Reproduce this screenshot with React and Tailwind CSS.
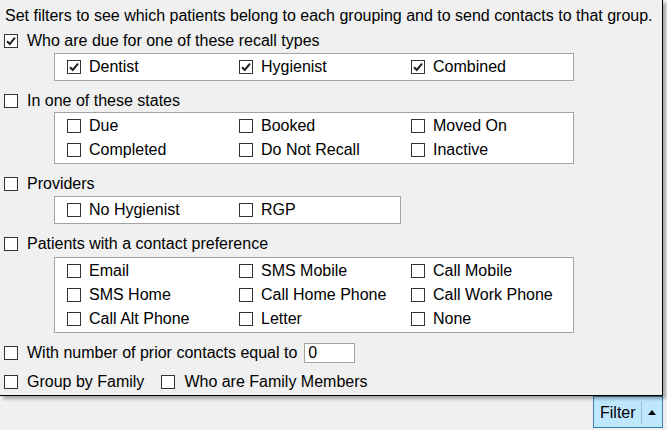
import clsx from "clsx";

function Check({ checked }) {
  return (
    <span className="flex h-[14px] w-[14px] shrink-0 items-center justify-center border border-[#333333] bg-white">
      {checked && (
        <svg width="12" height="12" viewBox="0 0 12 12">
          <path d="M2 6.2 L4.8 9 L10 2.6" fill="none" stroke="#222222" strokeWidth="2" />
        </svg>
      )}
    </span>
  );
}

function Option({ label, checked, className }) {
  return (
    <div className={clsx("flex h-[24px] items-center gap-[8px] whitespace-nowrap", className)}>
      <Check checked={checked} />
      <span>{label}</span>
    </div>
  );
}

function Group({ items, width = "w-[520px]", className }) {
  return (
    <div
      className={clsx(
        "ml-[50px] grid grid-cols-[172px_172px_172px] border border-[#a3a3a3] bg-white py-px pl-[12px]",
        width,
        className
      )}
    >
      {items.map((it) => (
        <Option key={it.label} label={it.label} checked={it.checked} />
      ))}
    </div>
  );
}

const recallTypes = [
  { label: "Dentist", checked: true },
  { label: "Hygienist", checked: true },
  { label: "Combined", checked: true },
];

const states = [
  { label: "Due" },
  { label: "Booked" },
  { label: "Moved On" },
  { label: "Completed" },
  { label: "Do Not Recall" },
  { label: "Inactive" },
];

const providers = [{ label: "No Hygienist" }, { label: "RGP" }];

const contactPrefs = [
  { label: "Email" },
  { label: "SMS Mobile" },
  { label: "Call Mobile" },
  { label: "SMS Home" },
  { label: "Call Home Phone" },
  { label: "Call Work Phone" },
  { label: "Call Alt Phone" },
  { label: "Letter" },
  { label: "None" },
];

export default function App() {
  return (
    <div className="h-[430px] w-[667px] overflow-hidden bg-[#f0f0f0] font-['Liberation_Sans',Arial,sans-serif] text-[16px] leading-[18px] text-black">
      <div className="relative z-10 flex h-[396px] w-[663px] flex-col border-r border-b border-black bg-[#f0f0f0] pt-[3px] pl-[4px] shadow-[3px_3px_3px_rgba(0,0,0,0.3)]">
        <div className="flex h-[24px] items-center whitespace-nowrap pt-[2px] pl-px">
          Set filters to see which patients belong to each grouping and to send contacts to that group.
        </div>

        <Option label="Who are due for one of these recall types" checked className="gap-[9px] pt-[4px]" />
        <Group items={recallTypes} className="mt-[2px]" />

        <Option label="In one of these states" className="mt-[6px] gap-[9px] pt-[4px]" />
        <Group items={states} className="mt-px" />

        <Option label="Providers" className="mt-[6px] gap-[9px] pt-[4px]" />
        <Group items={providers} width="w-[347px]" className="mt-[2px]" />

        <Option label="Patients with a contact preference" className="mt-[6px] gap-[9px] pt-[4px]" />
        <Group items={contactPrefs} className="mt-[3px]" />

        <div className="mt-[8px] flex h-[24px] items-center gap-[9px] whitespace-nowrap">
          <Check />
          <span>With number of prior contacts equal to</span>
          <div className="-ml-[2px] flex h-[20px] w-[51px] items-center border border-[#a3a3a3] bg-white pl-[3px]">
            0
          </div>
        </div>

        <div className="mt-[5px] flex h-[24px] items-center whitespace-nowrap">
          <Option label="Group by Family" className="gap-[9px]" />
          <Option label="Who are Family Members" className="ml-[17px] gap-[9px]" />
        </div>
      </div>

      <div className="flex w-[663px] justify-end">
        <div className="flex h-[32px] w-[70px] items-center border border-[#3c7fb1] bg-[#bee6fd] pt-px">
          <span className="pl-[6px]">Filter</span>
          <span className="ml-[5px] h-[22px] w-px bg-[#9fb8cc]" />
          <svg width="8" height="5" viewBox="0 0 8 5" className="ml-[6px]">
            <path d="M0 5 L4 0 L8 5 Z" fill="#000000" />
          </svg>
        </div>
      </div>
    </div>
  );
}
